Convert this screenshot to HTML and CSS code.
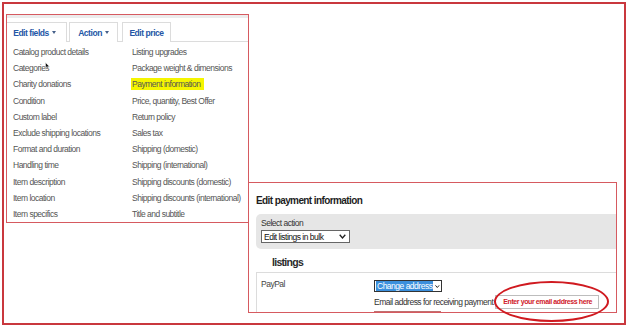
FILE: index.html
```html
<!DOCTYPE html>
<html lang="en">
<head>
  <meta charset="UTF-8">
  <title>Edit payment information</title>
  <link rel="stylesheet" href="styles.css">
</head>
<body>
<div class="frame">

  <!-- bulk edit menu -->
  <div class="panel edit-menu">
    <div class="menu-top"></div>
    <div class="tabs">
      <div class="tab tab-fields">Edit fields <span class="caret"></span></div>
      <div class="tab tab-action">Action <span class="caret"></span></div>
      <div class="tab tab-price">Edit price</div>
    </div>
    <div class="fields">
      <ul class="field-col first">
        <li>Catalog product details</li>
        <li><span class="cursor-wrap">Categories<svg class="cursor" width="5" height="7" viewBox="0 0 5 7"><path d="M0.5 0.5 L0.5 6 L1.8 4.8 L2.8 6.8 L3.6 6.4 L2.7 4.5 L4.4 4.5 Z" fill="#111" stroke="#fff" stroke-width="0.5"/></svg></span></li>
        <li>Charity donations</li>
        <li>Condition</li>
        <li>Custom label</li>
        <li>Exclude shipping locations</li>
        <li>Format and duration</li>
        <li>Handling time</li>
        <li>Item description</li>
        <li>Item location</li>
        <li>Item specifics</li>
      </ul>
      <ul class="field-col">
        <li>Listing upgrades</li>
        <li>Package weight &amp; dimensions</li>
        <li><span class="highlight">Payment information</span></li>
        <li>Price, quantity, Best Offer</li>
        <li>Return policy</li>
        <li>Sales tax</li>
        <li>Shipping (domestic)</li>
        <li>Shipping (international)</li>
        <li>Shipping discounts (domestic)</li>
        <li>Shipping discounts (international)</li>
        <li>Title and subtitle</li>
      </ul>
    </div>
  </div>

  <!-- payment form -->
  <div class="panel payment">
    <h2>Edit payment information</h2>
    <div class="action-box">
      <div class="action-label">Select action</div>
      <div class="select bulk">
        <span>Edit listings in bulk</span>
        <svg class="chev" width="7" height="5" viewBox="0 0 7 5"><polyline points="0.7,0.8 3.5,4 6.3,0.8" fill="none" stroke="#222" stroke-width="1.3"/></svg>
      </div>
    </div>
    <h3>listings</h3>
    <div class="listing-row">
      <div class="row-label">PayPal</div>
      <div class="row-body">
        <div class="select addr">
          <span class="picked">Change address</span>
          <svg class="chev" width="7" height="5" viewBox="0 0 7 5"><polyline points="0.7,0.8 3.5,4 6.3,0.8" fill="none" stroke="#111" stroke-width="1.4"/></svg>
        </div>
        <div class="email-line">
          <span>Email address for receiving payment</span>
          <span class="email-input">Enter your email address here</span>
        </div>
        <div class="cut-btn"></div>
      </div>
    </div>
  </div>

  <!-- red callout round the email field -->
  <div class="callout"></div>
</div>
</body>
</html>
```

FILE: styles.css
```css
body{
  margin: 0;
  background: #fff;
  font-family: 'Liberation Sans', Arial, sans-serif;
}

.frame{
  position: relative;
  box-sizing: border-box;
  margin: 2px;
  width: 624px;
  height: 323px;
  border: 2px solid #c9383e;
  display: flex;
  align-items: flex-start;
}

.panel{
  box-sizing: border-box;
  border: 1px solid #d65a60;
  background: #fff;
}

/* left menu */
.edit-menu{
  margin-left: 2px;
  margin-top: 10px;
  width: 243px;
  height: 209px;
}

.menu-top{
  height: 3px;
  background: #ececec;
}

.tabs{
  display: flex;
  margin-top: 4px;
  height: 20px;
  box-sizing: border-box;
  border-bottom: 1px solid #dcdcdc;
}

.tab{
  box-sizing: border-box;
  height: 20px;
  border: 1px solid #dcdcdc;
  border-bottom: none;
  background: #fff;
  display: flex;
  align-items: center;
  justify-content: center;
  font-size: 8.5px;
  letter-spacing: -0.45px;
  font-weight: 700;
  color: #2456a6;
}

.tab-fields{
  width: 60px;
  border-left: none;
  padding-right: 4px;
}

.tab-action{
  width: 49px;
  margin-left: 2px;
}

.tab-price{
  width: 49px;
  margin-left: 4px;
}

.caret{
  display: inline-block;
  margin-left: 3px;
  border-left: 2px solid transparent;
  border-right: 2px solid transparent;
  border-top: 3px solid #45608a;
}

.fields{
  display: flex;
  padding: 2px 0 0 6px;
}

.field-col{
  list-style: none;
  margin: 0;
  padding: 0;
  font-size: 8.5px;
  letter-spacing: -0.5px;
  line-height: 16.2px;
  color: #555;
  white-space: nowrap;
}

.field-col.first{
  flex: none;
  width: 119px;
}

.cursor-wrap{
  position: relative;
}

.cursor{
  position: absolute;
  right: -1px;
  top: -1px;
}

.highlight{
  background: #f5f500;
  padding: 1px 4px 1px 1px;
  margin-left: -1px;
}

/* right form */
.payment{
  margin-left: -1px;
  margin-top: 178px;
  width: 369px;
  height: 131px;
  overflow: hidden;
}

.payment h2{
  margin: 11px 0 0 7px;
  font-size: 10px;
  letter-spacing: -0.6px;
  line-height: 14px;
  font-weight: 700;
  color: #1e1e1e;
}

.action-box{
  margin: 6px 0 0 7px;
  padding: 3px 0 6px 5px;
  background: #e6e6e6;
  border-radius: 5px 0 0 5px;
}

.action-label{
  font-size: 8.5px;
  letter-spacing: -0.5px;
  line-height: 12px;
  color: #333;
}

.select{
  box-sizing: border-box;
  display: flex;
  align-items: center;
  background: #fff;
  font-size: 8.5px;
  letter-spacing: -0.5px;
  color: #111;
  white-space: nowrap;
}

.bulk{
  margin-top: 1px;
  width: 89px;
  height: 13px;
  border: 1px solid #666;
  padding: 0 3px 0 2px;
  justify-content: space-between;
}

.payment h3{
  margin: 6px 0 0 23px;
  font-size: 10.5px;
  letter-spacing: -0.7px;
  line-height: 14px;
  font-weight: 700;
  color: #2a2a2a;
}

.listing-row{
  display: flex;
  margin: 3px 0 0 7px;
  padding-top: 6px;
  border-top: 1px solid #dcdcdc;
  border-left: 1px solid #dcdcdc;
  height: 60px;
}

.row-label{
  flex: none;
  width: 113px;
  padding-left: 4px;
  font-size: 8.5px;
  letter-spacing: -0.5px;
  line-height: 11px;
  color: #444;
}

.addr{
  margin-top: 1px;
  width: 68px;
  height: 12px;
  border: 1px solid #333;
  padding: 1px;
}

.addr .picked{
  background: #3b8fdc;
  color: #fff;
  line-height: 10px;
  padding: 0 1px;
}

.addr .chev{
  margin-left: 2px;
}

.email-line{
  display: flex;
  align-items: center;
  margin-top: 3px;
  height: 14px;
  font-size: 8.5px;
  letter-spacing: -0.52px;
  color: #333;
  white-space: nowrap;
}

.email-input{
  flex: none;
  box-sizing: border-box;
  margin-left: 2px;
  width: 104px;
  height: 14px;
  border: 1px solid #bdbdbd;
  padding-left: 7px;
  font-size: 7px;
  letter-spacing: -0.4px;
  line-height: 12px;
  font-weight: 700;
  color: #d0202a;
}

.cut-btn{
  margin-top: 2px;
  width: 67px;
  height: 4px;
  background: #c07070;
}

.callout{
  position: absolute;
  left: 490px;
  top: 277px;
  box-sizing: border-box;
  width: 115px;
  height: 41px;
  border: 2px solid #d01a20;
  border-radius: 50%;
}
```
